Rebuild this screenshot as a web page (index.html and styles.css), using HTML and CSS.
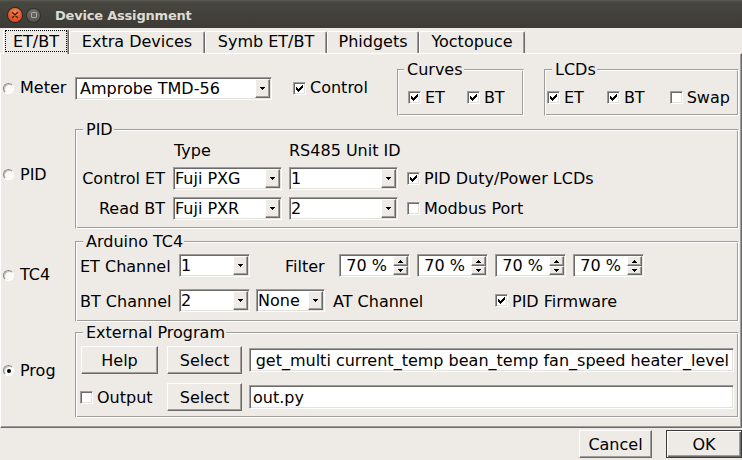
FILE: index.html
```html
<!DOCTYPE html>
<html>
<head>
<meta charset="utf-8">
<title>Device Assignment</title>
<link rel="stylesheet" href="styles.css">
</head>
<body>
<div class="titlebar">
  <span class="wbtn wclose"><svg width="8" height="8" viewBox="0 0 8 8"><path d="M1.5 1.5L6.5 6.5M6.5 1.5L1.5 6.5" stroke="#4a1a0a" stroke-width="1.4" stroke-linecap="round"/></svg></span>
  <span class="wbtn wmin"><span class="wsq"></span></span>
  <span class="wtitle">Device Assignment</span>
</div>
<div class="tabs">
  <div class="tab tab-sel tab-etbt"><span class="focus">ET/BT</span></div>
  <div class="tab tab-extra">Extra Devices</div>
  <div class="tab tab-symb">Symb ET/BT</div>
  <div class="tab tab-phid">Phidgets</div>
  <div class="tab tab-yocto">Yoctopuce</div>
</div>
<div class="panel">
  <div class="row row-meter">
    <div class="side"><span class="radio"></span>Meter</div>
    <div class="field combo combo-meter"><span class="cval">Amprobe TMD-56</span><span class="drop"><svg width="5" height="3" viewBox="0 0 5 3"><path d="M0 0h5v1H0zM1 1h3v1H1zM2 2h1v1H2z"/></svg></span></div>
    <div class="chk chk-control"><span class="box"><svg width="11" height="11" viewBox="0 0 11 11"><path d="M2 4h1v3H2zM3 5h1v3H3zM4 6h1v3H4zM5 5h1v3H5zM6 4h1v3H6zM7 3h1v3H7zM8 2h1v3H8z"/></svg></span>Control</div>
    <div class="grp grp-curves">
      <div class="gtitle gtitle-curves"><span>Curves</span></div>
      <div class="gin gin-row gin-curves">
        <div class="chk"><span class="box"><svg width="11" height="11" viewBox="0 0 11 11"><path d="M2 4h1v3H2zM3 5h1v3H3zM4 6h1v3H4zM5 5h1v3H5zM6 4h1v3H6zM7 3h1v3H7zM8 2h1v3H8z"/></svg></span>ET</div>
        <div class="chk chk-cbt"><span class="box"><svg width="11" height="11" viewBox="0 0 11 11"><path d="M2 4h1v3H2zM3 5h1v3H3zM4 6h1v3H4zM5 5h1v3H5zM6 4h1v3H6zM7 3h1v3H7zM8 2h1v3H8z"/></svg></span>BT</div>
      </div>
    </div>
    <div class="grp grp-lcds">
      <div class="gtitle"><span>LCDs</span></div>
      <div class="gin gin-row gin-lcds">
        <div class="chk"><span class="box"><svg width="11" height="11" viewBox="0 0 11 11"><path d="M2 4h1v3H2zM3 5h1v3H3zM4 6h1v3H4zM5 5h1v3H5zM6 4h1v3H6zM7 3h1v3H7zM8 2h1v3H8z"/></svg></span>ET</div>
        <div class="chk chk-lbt"><span class="box"><svg width="11" height="11" viewBox="0 0 11 11"><path d="M2 4h1v3H2zM3 5h1v3H3zM4 6h1v3H4zM5 5h1v3H5zM6 4h1v3H6zM7 3h1v3H7zM8 2h1v3H8z"/></svg></span>BT</div>
        <div class="chk chk-swap"><span class="box"></span>Swap</div>
      </div>
    </div>
  </div>

  <div class="row row-pid">
    <div class="side"><span class="radio"></span>PID</div>
    <div class="grp grp-wide">
      <div class="gtitle"><span>PID</span></div>
      <div class="gin gin-pid">
        <span></span><span class="hdr hdr-type">Type</span><span class="hdr">RS485 Unit ID</span><span></span>
        <span class="plbl">Control ET</span>
        <div class="field combo"><span class="cval">Fuji PXG</span><span class="drop"><svg width="5" height="3" viewBox="0 0 5 3"><path d="M0 0h5v1H0zM1 1h3v1H1zM2 2h1v1H2z"/></svg></span></div>
        <div class="field combo"><span class="cval">1</span><span class="drop"><svg width="5" height="3" viewBox="0 0 5 3"><path d="M0 0h5v1H0zM1 1h3v1H1zM2 2h1v1H2z"/></svg></span></div>
        <div class="chk chk-pcol"><span class="box"><svg width="11" height="11" viewBox="0 0 11 11"><path d="M2 4h1v3H2zM3 5h1v3H3zM4 6h1v3H4zM5 5h1v3H5zM6 4h1v3H6zM7 3h1v3H7zM8 2h1v3H8z"/></svg></span>PID Duty/Power LCDs</div>
        <span class="plbl">Read BT</span>
        <div class="field combo"><span class="cval">Fuji PXR</span><span class="drop"><svg width="5" height="3" viewBox="0 0 5 3"><path d="M0 0h5v1H0zM1 1h3v1H1zM2 2h1v1H2z"/></svg></span></div>
        <div class="field combo"><span class="cval">2</span><span class="drop"><svg width="5" height="3" viewBox="0 0 5 3"><path d="M0 0h5v1H0zM1 1h3v1H1zM2 2h1v1H2z"/></svg></span></div>
        <div class="chk chk-pcol"><span class="box"></span>Modbus Port</div>
      </div>
    </div>
  </div>

  <div class="row row-tc4">
    <div class="side side-tc4"><span class="radio"></span>TC4</div>
    <div class="grp grp-wide">
      <div class="gtitle"><span>Arduino TC4</span></div>
      <div class="gin gin-tc4">
        <div class="tline">
          <span class="tlbl">ET Channel</span>
          <div class="field combo combo-ch"><span class="cval">1</span><span class="drop"><svg width="5" height="3" viewBox="0 0 5 3"><path d="M0 0h5v1H0zM1 1h3v1H1zM2 2h1v1H2z"/></svg></span></div>
          <span class="lbl-filter">Filter</span>
          <div class="field spin"><span class="sval">70 %</span><span class="sarrows"><span class="sup"><svg width="5" height="3" viewBox="0 0 5 3"><path d="M2 0h1v1H2zM1 1h3v1H1zM0 2h5v1H0z"/></svg></span><span class="sdn"><svg width="5" height="3" viewBox="0 0 5 3"><path d="M0 0h5v1H0zM1 1h3v1H1zM2 2h1v1H2z"/></svg></span></span></div>
          <div class="field spin"><span class="sval">70 %</span><span class="sarrows"><span class="sup"><svg width="5" height="3" viewBox="0 0 5 3"><path d="M2 0h1v1H2zM1 1h3v1H1zM0 2h5v1H0z"/></svg></span><span class="sdn"><svg width="5" height="3" viewBox="0 0 5 3"><path d="M0 0h5v1H0zM1 1h3v1H1zM2 2h1v1H2z"/></svg></span></span></div>
          <div class="field spin"><span class="sval">70 %</span><span class="sarrows"><span class="sup"><svg width="5" height="3" viewBox="0 0 5 3"><path d="M2 0h1v1H2zM1 1h3v1H1zM0 2h5v1H0z"/></svg></span><span class="sdn"><svg width="5" height="3" viewBox="0 0 5 3"><path d="M0 0h5v1H0zM1 1h3v1H1zM2 2h1v1H2z"/></svg></span></span></div>
          <div class="field spin"><span class="sval">70 %</span><span class="sarrows"><span class="sup"><svg width="5" height="3" viewBox="0 0 5 3"><path d="M2 0h1v1H2zM1 1h3v1H1zM0 2h5v1H0z"/></svg></span><span class="sdn"><svg width="5" height="3" viewBox="0 0 5 3"><path d="M0 0h5v1H0zM1 1h3v1H1zM2 2h1v1H2z"/></svg></span></span></div>
        </div>
        <div class="tline">
          <span class="tlbl">BT Channel</span>
          <div class="field combo combo-ch"><span class="cval">2</span><span class="drop"><svg width="5" height="3" viewBox="0 0 5 3"><path d="M0 0h5v1H0zM1 1h3v1H1zM2 2h1v1H2z"/></svg></span></div>
          <div class="field combo combo-none"><span class="cval">None</span><span class="drop"><svg width="5" height="3" viewBox="0 0 5 3"><path d="M0 0h5v1H0zM1 1h3v1H1zM2 2h1v1H2z"/></svg></span></div>
          <span class="lbl-at">AT Channel</span>
          <div class="chk chk-fw"><span class="box"><svg width="11" height="11" viewBox="0 0 11 11"><path d="M2 4h1v3H2zM3 5h1v3H3zM4 6h1v3H4zM5 5h1v3H5zM6 4h1v3H6zM7 3h1v3H7zM8 2h1v3H8z"/></svg></span>PID Firmware</div>
        </div>
      </div>
    </div>
  </div>

  <div class="row row-prog">
    <div class="side"><span class="radio"><span class="dot"></span></span>Prog</div>
    <div class="grp grp-wide">
      <div class="gtitle"><span>External Program</span></div>
      <div class="gin gin-prog">
        <div class="pline">
          <div class="btn btn-help">Help</div>
          <div class="btn btn-sel">Select</div>
          <div class="field ledit ledit-end"><span>get_multi current_temp bean_temp fan_speed heater_level</span></div>
        </div>
        <div class="pline">
          <div class="chk chk-output"><span class="box"></span>Output</div>
          <div class="btn btn-sel">Select</div>
          <div class="field ledit"><span>out.py</span></div>
        </div>
      </div>
    </div>
  </div>
</div>
<div class="footer">
  <div class="btn btn-cancel">Cancel</div>
  <div class="btn btn-ok">OK</div>
</div>
</body>
</html>
```
FILE: styles.css
```css
* { box-sizing: border-box; }
html, body { margin: 0; padding: 0; }
body {
  width: 742px;
  height: 460px;
  overflow: hidden;
  background: #eeebe7;
  font-family: "DejaVu Sans", "Noto Sans", sans-serif;
  font-size: 16px;
  line-height: 16px;
  color: #000;
}

/* title bar */
.titlebar {
  height: 28px;
  display: flex;
  align-items: center;
  background: linear-gradient(to bottom, #5c5b55 0, #47463f 2px, #3c3b37 100%);
}
.wbtn {
  flex: none;
  border-radius: 50%;
  display: flex;
  align-items: center;
  justify-content: center;
}
.wbtn svg { display: block; }
.wclose {
  width: 14px;
  height: 14px;
  margin-left: 8px;
  margin-top: 2px;
  background: radial-gradient(circle at 50% 30%, #f48a5a 0, #e65a2a 50%, #cd4616 100%);
  box-shadow: 0 0 0 1px rgba(0, 0, 0, 0.35);
}
.wmin {
  width: 13px;
  height: 13px;
  margin-left: 5px;
  margin-top: 2px;
  background: linear-gradient(#6f6e69, #56554f);
  box-shadow: 0 0 0 1px rgba(0, 0, 0, 0.3);
}
.wsq {
  width: 6px;
  height: 6px;
  border: 1px solid #aaa8a2;
  border-radius: 1px;
}
.wtitle {
  margin-left: 15px;
  margin-top: 3px;
  font-weight: bold;
  font-size: 13px;
  letter-spacing: -0.2px;
  color: #dfdbd2;
}

/* tabs */
.tabs {
  height: 25px;
  display: flex;
  align-items: flex-end;
  padding-left: 3px;
}
.tab {
  flex: none;
  height: 22px;
  padding-top: 2px;
  text-align: center;
  white-space: nowrap;
  border-top: 1px solid #fff;
  border-left: 1px solid #fff;
  border-right: 1px solid #6a6a6a;
  box-shadow: inset -1px 0 0 #a09e9a;
  border-top-left-radius: 2px;
  border-top-right-radius: 2px;
}
.tab-sel {
  height: 25px;
  margin-bottom: -1px;
  padding: 0 1px;
  position: relative;
  z-index: 1;
  background: #eeebe7;
}
.focus {
  display: block;
  height: 22px;
  padding-top: 3px;
  border: 1px dotted #000;
}
.tab-etbt { width: 66px; }
.tab-extra { width: 136px; }
.tab-symb { width: 122px; }
.tab-phid { width: 92px; }
.tab-yocto { width: 106px; }

/* panel */
.panel {
  height: 375px;
  padding: 6px 2px 0 2px;
  border: 1px solid;
  border-color: #fff #6a6a6a #6a6a6a #fff;
  box-shadow: inset -1px -1px 0 #a09e9a;
}
.row {
  display: flex;
  align-items: center;
}
.row-pid { margin-top: 4px; }
.row-tc4 { margin-top: 3px; }
.row-prog { margin-top: 1px; }
.side {
  flex: none;
  width: 72px;
  display: flex;
  align-items: center;
}
.side-tc4 { margin-bottom: 4px; }

.radio {
  flex: none;
  width: 11px;
  height: 11px;
  margin-right: 6px;
  border-radius: 50%;
  border: 1px solid;
  border-color: #8c8a86 #fff #fff #8c8a86;
  background: #fafaf9;
  box-shadow: inset 1px 1px 0 #c4c2be;
  display: flex;
  align-items: center;
  justify-content: center;
}
.dot {
  width: 4px;
  height: 4px;
  border-radius: 50%;
  background: #000;
}

/* group boxes */
.grp {
  margin-top: 9px;
  border: 1px solid;
  border-color: #a09e9a #fff #fff #a09e9a;
  box-shadow: inset 1px 1px 0 #fff, inset -1px -1px 0 #a09e9a;
}
.grp-curves { flex: none; width: 127px; }
.grp-lcds { flex: 1; margin-left: 20px; }
.grp-wide { flex: 1; min-width: 0; }
.gtitle {
  margin-top: -10px;
  height: 19px;
  line-height: 19px;
  display: flex;
  padding-left: 7px;
}
.gtitle span {
  background: #eeebe7;
  padding: 0 1px 0 3px;
  white-space: nowrap;
}
.gtitle-curves { padding-left: 6px; }

/* checkboxes */
.chk {
  flex: none;
  display: flex;
  align-items: center;
  white-space: nowrap;
}
.box {
  flex: none;
  width: 13px;
  height: 13px;
  margin-right: 4px;
  background: #fff;
  border: 1px solid;
  border-color: #a09e9a #fff #fff #a09e9a;
  box-shadow: inset 1px 1px 0 #6a6a6a, inset -1px -1px 0 #e3e1dd;
}
.box svg { display: block; }
.chk-control { width: 104px; margin-left: 21px; }

.gin-row {
  display: flex;
  align-items: center;
  height: 36px;
  padding-top: 8px;
  padding-bottom: 8px;
}
.gin-row .chk { height: 20px; padding-top: 2px; }
.gin-row .chk .box { margin-top: -2px; }
.gin-curves { padding-left: 10px; }
.chk-cbt { margin-left: 22px; }
.gin-lcds { padding-left: 2px; }
.chk-lbt { margin-left: 23px; }
.chk-swap { margin-left: 25px; }

/* fields */
.field {
  background: #fff;
  border: 1px solid;
  border-color: #a09e9a #fff #fff #a09e9a;
  box-shadow: inset 1px 1px 0 #6a6a6a, inset -1px -1px 0 #e3e1dd;
}
.combo {
  flex: none;
  height: 23px;
  padding: 1px;
  display: flex;
  align-items: stretch;
}
.combo-meter { width: 197px; margin-top: 1px; }
.combo-meter .cval { padding-left: 3px; }
.cval {
  flex: 1;
  min-width: 0;
  padding-left: 0;
  display: flex;
  align-items: center;
  white-space: nowrap;
  overflow: hidden;
}
.drop, .sup, .sdn {
  flex: none;
  display: flex;
  align-items: center;
  justify-content: center;
  background: #eeebe7;
  border: 1px solid;
  border-color: #fff #6a6a6a #6a6a6a #fff;
  box-shadow: inset -1px -1px 0 #a09e9a;
}
.drop { width: 15px; }
.drop svg, .sup svg, .sdn svg { display: block; }

/* PID grid */
.gin-pid {
  display: grid;
  grid-template-columns: 85px 109px 109px auto;
  grid-template-rows: 18px 23px 23px;
  column-gap: 7px;
  row-gap: 7px;
  padding: 3px 0 8px 5px;
}
.hdr { align-self: start; white-space: nowrap; padding-top: 1px; }
.hdr-type { padding-left: 1px; }
.plbl {
  align-self: center;
  text-align: right;
  padding-right: 1px;
  white-space: nowrap;
}
.chk-pcol { margin-left: 2px; }

/* TC4 */
.gin-tc4 {
  display: flex;
  flex-direction: column;
  gap: 12px;
  padding: 3px 0 9px 4px;
}
.tline {
  display: flex;
  align-items: center;
  height: 23px;
}
.tlbl, .lbl-filter, .lbl-at { padding-top: 2px; }
.tlbl { flex: none; width: 99px; white-space: nowrap; }
.combo-ch { width: 71px; }
.combo-none { width: 69px; margin-left: 6px; }
.lbl-filter { flex: none; width: 89px; padding-left: 35px; }
.lbl-at { flex: none; width: 162px; margin-left: 8px; white-space: nowrap; }
.chk-fw { padding-top: 2px; }
.chk-fw .box { margin-top: -2px; }
.spin {
  flex: none;
  width: 71px;
  height: 23px;
  padding: 1px;
  display: flex;
  margin-right: 7px;
}
.sval {
  flex: 1;
  display: flex;
  align-items: center;
  justify-content: flex-end;
  padding-right: 6px;
  white-space: nowrap;
}
.sarrows {
  flex: none;
  width: 15px;
  display: flex;
  flex-direction: column;
}
.sup { height: 10px; }
.sdn { height: 9px; }

/* External program */
.gin-prog {
  display: flex;
  flex-direction: column;
  gap: 9px;
  padding: 4px 4px 6px 5px;
}
.pline {
  display: flex;
  align-items: center;
  height: 28px;
}
.btn {
  flex: none;
  height: 28px;
  padding-top: 2px;
  display: flex;
  align-items: center;
  justify-content: center;
  background: #eeebe7;
  border: 1px solid;
  border-color: #fff #6a6a6a #6a6a6a #fff;
  box-shadow: inset -1px -1px 0 #a09e9a;
  white-space: nowrap;
}
.btn-help { width: 77px; margin-right: 9px; }
.btn-sel { width: 75px; }
.chk-output { width: 87px; margin-left: -1px; padding-top: 2px; }
.chk-output .box { margin-top: -2px; }
.ledit {
  flex: 1;
  min-width: 0;
  height: 24px;
  margin-left: 7px;
  display: flex;
  align-items: center;
  padding: 1px 3px 0;
  white-space: nowrap;
  overflow: hidden;
}
.ledit-end { justify-content: flex-end; padding-right: 4px; }

/* footer */
.footer {
  height: 32px;
  display: flex;
  justify-content: flex-end;
  align-items: flex-start;
  padding-top: 2px;
}
.btn-cancel { width: 73px; margin-right: 14px; }
.btn-ok {
  width: 76px;
  border-color: #3b3b3b;
  box-shadow: inset 1px 1px 0 #fff, inset -1px -1px 0 #6a6a6a, inset -2px -2px 0 #a09e9a;
}
```
